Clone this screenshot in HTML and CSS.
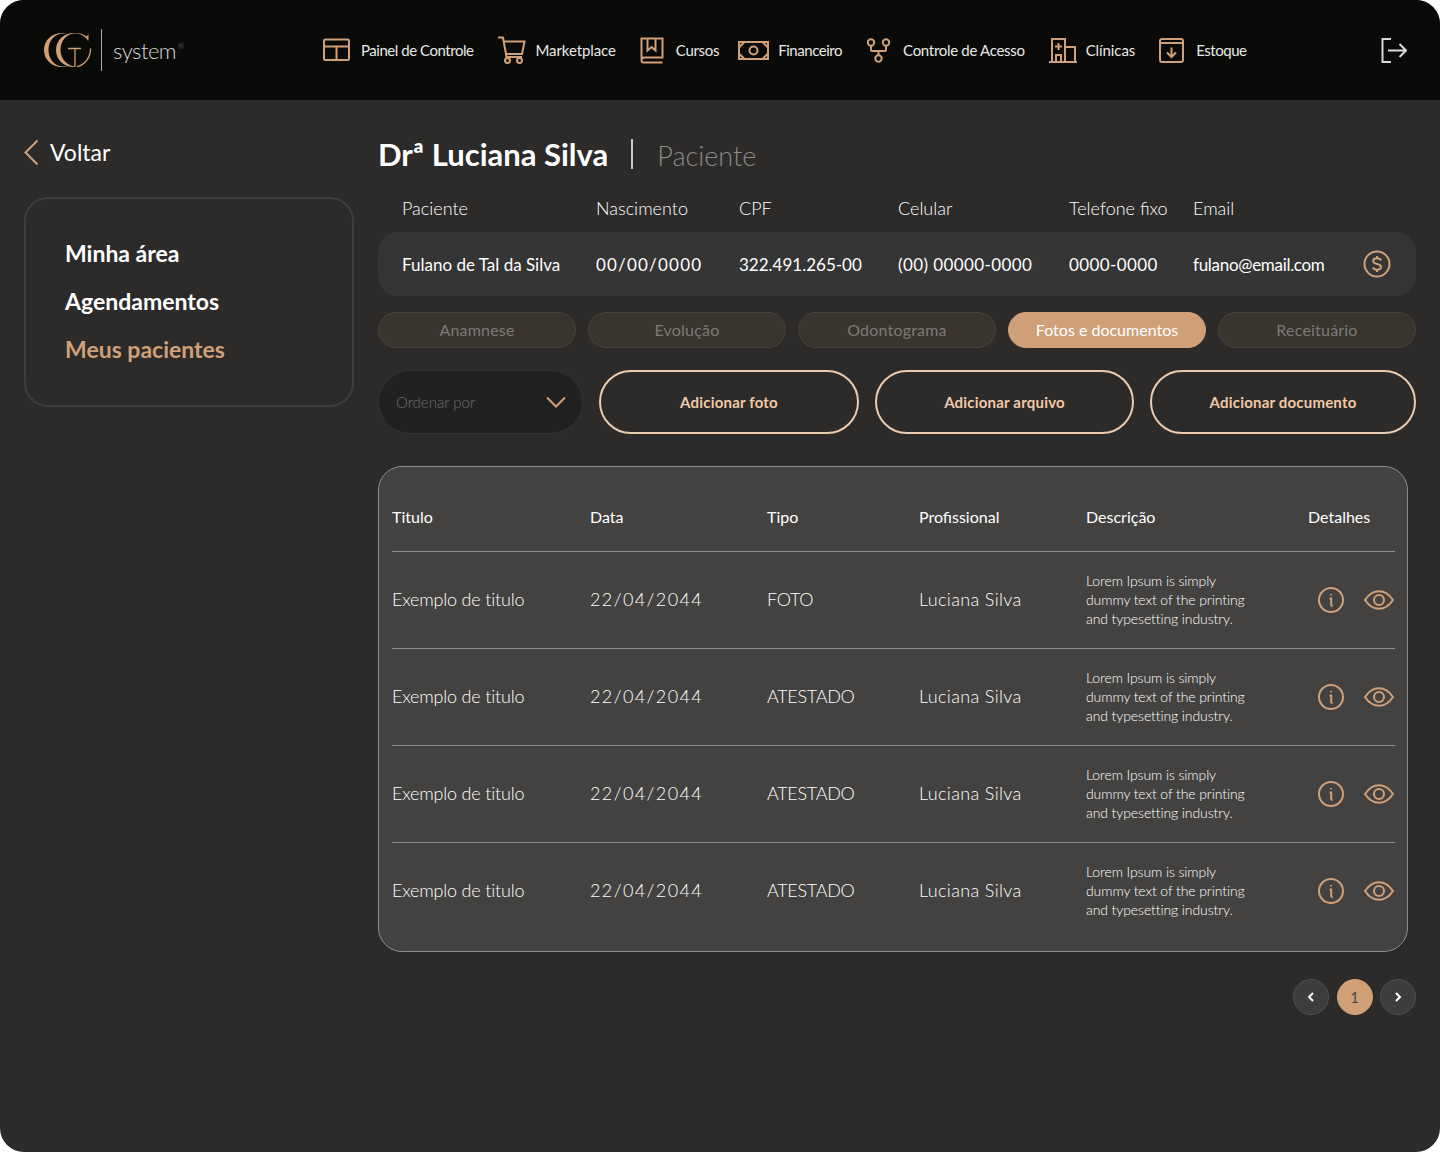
FILE: index.html
```html
<!DOCTYPE html>
<html lang="pt-BR">
<head>
    <meta charset="UTF-8">
    <meta name="viewport" content="width=device-width, initial-scale=1.0">
    <title>GC System - Paciente</title>
    <link rel="stylesheet" href="styles.css">
</head>
<body>
    <svg class="sprite" xmlns="http://www.w3.org/2000/svg">
        <symbol id="icon-info" viewBox="0 0 26 26">
            <circle cx="13" cy="13" r="12"/>
            <path d="M11.500 11.500h1.700v6.500c0 .8.500 1 1.500 1M13 7v1.200"/>
        </symbol>
        <symbol id="icon-eye" viewBox="0 0 30 20">
            <path d="M1 10C5 4 9.500 1.200 15 1.200S25 4 29 10c-4 6-8.500 8.800-14 8.800S5 16 1 10z"/>
            <circle cx="15" cy="10" r="5"/>
        </symbol>
    </svg>

    <div class="app">
        <header class="topbar">
            <div class="brand">
                <svg class="brand-mark" width="48" height="36" viewBox="0 0 48 36">
                    <path class="brand-fill" d="M18 1C8 1 0 8 0 18s8 17 18 17c2.500 0 5-.5 7-1.500-2 .6-4 .9-6 .9C11 34.400 4.500 27.500 4.500 18S11 1.600 19 1.600c2 0 4 .3 6 1.200C23 1.500 20.500 1 18 1z"/>
                    <path class="brand-fill" d="M30 1C20 1 12 8 12 18s8 17 18 17c1 0 1.800-.1 2.500-.3C24 34.400 16.500 27.500 16.500 18S23 1.500 31 1.500c5.500 0 10 2.500 13 7l.5-.1V2.500h-.6L43 4.500C40 2 35.500 1 30 1z"/>
                    <path class="brand-line" d="M24 16.500h13M31 16.500v18M46.500 16.500C46.800 25 41 33 33 34.700"/>
                </svg>
                <span class="brand-divider"></span>
                <span class="brand-name">system<sup>®</sup></span>
            </div>

            <nav class="nav">
                <a class="nav-item nav-item-long">
                    <svg width="28" height="24" viewBox="0 0 28 24"><rect x="1" y="1.500" width="25" height="20.500" rx="1.500"/><path d="M1 8.500h25M13.500 8.500V22"/></svg>
                    <span>Painel de Controle</span>
                </a>
                <a class="nav-item nav-item-wide">
                    <svg width="28" height="28" viewBox="0 0 28 28"><path d="M0 1.500h5l3.500 19.500h15.500M6 5.500h20.500l-2.500 12.500H8"/><circle cx="9.500" cy="24.500" r="2.500"/><circle cx="21.500" cy="24.500" r="2.500"/></svg>
                    <span>Marketplace</span>
                </a>
                <a class="nav-item nav-item-tight">
                    <svg width="26" height="27" viewBox="0 0 26 27"><path d="M1.500 21.500V1.500h21v19H4.500a3 3 0 0 0-3 3v.5a2 2 0 0 0 2 1.500h19"/><path d="M7.500 1.500v12l4-3.500 4 3.500v-12"/></svg>
                    <span>Cursos</span>
                </a>
                <a class="nav-item nav-item-close nav-item-long">
                    <svg width="31" height="19" viewBox="0 0 31 19"><rect x="1" y="1" width="29" height="17"/><circle cx="15.500" cy="9.500" r="4"/><path d="M1 6.500l5.500-5.500M1 12.500l5.500 5.500M30 6.500l-5.500-5.500M30 12.500l-5.500 5.500"/></svg>
                    <span>Financeiro</span>
                </a>
                <a class="nav-item">
                    <svg width="27" height="25" viewBox="0 0 27 25"><circle cx="5" cy="4.500" r="3.200"/><circle cx="20" cy="4.500" r="3.200"/><circle cx="12.500" cy="20.500" r="3.200"/><path d="M5 7.700v4.300a1 1 0 0 0 1 1h13a1 1 0 0 0 1-1V7.700M12.500 13v4.300"/></svg>
                    <span>Controle de Acesso</span>
                </a>
                <a class="nav-item nav-item-close nav-item-wide">
                    <svg width="28" height="25" viewBox="0 0 28 25"><path d="M0 24h28M3 24V1h13v23M16 9h10v15M7 24v-7h5v7M9.500 5v7M6 8.500h7"/></svg>
                    <span>Clínicas</span>
                </a>
                <a class="nav-item nav-item-long">
                    <svg width="27" height="25" viewBox="0 0 27 25"><rect x="1" y="1" width="23" height="23" rx="2"/><path d="M1 5h23M12.500 9.500v9.500M8 14.500l4.500 4.500 4.500-4.500"/></svg>
                    <span>Estoque</span>
                </a>
            </nav>

            <a class="logout">
                <svg width="26" height="25" viewBox="0 0 26 25"><path d="M10 1H1.500v23H10M7 12.500h18M18.500 6l6.500 6.500-6.500 6.500"/></svg>
            </a>
        </header>

        <main class="layout">
            <aside class="side">
                <a class="back">
                    <svg width="15" height="27" viewBox="0 0 15 27"><path d="M13.500 1.500L1.500 13.500l12 12"/></svg>
                    <span>Voltar</span>
                </a>
                <div class="side-menu">
                    <a class="side-link">Minha área</a>
                    <a class="side-link">Agendamentos</a>
                    <a class="side-link side-link-active">Meus pacientes</a>
                </div>
            </aside>

            <section class="content">
                <div class="title-row">
                    <h1>Drª Luciana Silva</h1>
                    <span class="title-sep"></span>
                    <span class="title-sub">Paciente</span>
                </div>

                <div class="patient-grid patient-head">
                    <span>Paciente</span>
                    <span>Nascimento</span>
                    <span>CPF</span>
                    <span>Celular</span>
                    <span>Telefone fixo</span>
                    <span>Email</span>
                </div>
                <div class="patient-grid patient-row">
                    <span>Fulano de Tal da Silva</span>
                    <span class="val-date">00/00/0000</span>
                    <span>322.491.265-00</span>
                    <span class="val-phone">(00) 00000-0000</span>
                    <span class="val-phone">0000-0000</span>
                    <span class="val-email">fulano@email.com</span>
                    <svg class="coin" width="28" height="28" viewBox="0 0 28 28"><circle cx="14" cy="14" r="12.500"/><path d="M18 10.500c-.5-1.300-2-2.200-4-2.200-2.300 0-3.800 1.200-3.800 2.800 0 4.200 7.800 1.700 7.800 5.900 0 1.600-1.700 2.700-4 2.700-2 0-3.500-.9-4.100-2.400M14 6v2.300M14 19.700V22"/></svg>
                </div>

                <div class="tabs">
                    <a class="tab">Anamnese</a>
                    <a class="tab">Evolução</a>
                    <a class="tab">Odontograma</a>
                    <a class="tab tab-active">Fotos e documentos</a>
                    <a class="tab">Receituário</a>
                </div>

                <div class="actions">
                    <div class="order">
                        <span>Ordenar por</span>
                        <svg width="20" height="12" viewBox="0 0 20 12"><path d="M1 1.500l9 9 9-9"/></svg>
                    </div>
                    <button class="action-btn">Adicionar foto</button>
                    <button class="action-btn">Adicionar arquivo</button>
                    <button class="action-btn">Adicionar documento</button>
                </div>

                <div class="table-card">
                    <table class="docs">
                        <thead>
                            <tr>
                                <th class="col-title">Titulo</th>
                                <th class="col-date">Data</th>
                                <th class="col-type">Tipo</th>
                                <th class="col-pro">Profissional</th>
                                <th class="col-desc">Descrição</th>
                                <th class="col-more">Detalhes</th>
                            </tr>
                        </thead>
                        <tbody>
                            <tr>
                                <td class="cell-title">Exemplo de titulo</td>
                                <td class="cell-date">22/04/2044</td>
                                <td class="cell-type">FOTO</td>
                                <td class="cell-pro">Luciana Silva</td>
                                <td class="desc">Lorem Ipsum is simply<br>dummy text of the printing<br>and typesetting industry.</td>
                                <td><div class="row-icons"><svg class="i-info"><use href="#icon-info"/></svg><svg class="i-eye"><use href="#icon-eye"/></svg></div></td>
                            </tr>
                            <tr>
                                <td class="cell-title">Exemplo de titulo</td>
                                <td class="cell-date">22/04/2044</td>
                                <td class="cell-type">ATESTADO</td>
                                <td class="cell-pro">Luciana Silva</td>
                                <td class="desc">Lorem Ipsum is simply<br>dummy text of the printing<br>and typesetting industry.</td>
                                <td><div class="row-icons"><svg class="i-info"><use href="#icon-info"/></svg><svg class="i-eye"><use href="#icon-eye"/></svg></div></td>
                            </tr>
                            <tr>
                                <td class="cell-title">Exemplo de titulo</td>
                                <td class="cell-date">22/04/2044</td>
                                <td class="cell-type">ATESTADO</td>
                                <td class="cell-pro">Luciana Silva</td>
                                <td class="desc">Lorem Ipsum is simply<br>dummy text of the printing<br>and typesetting industry.</td>
                                <td><div class="row-icons"><svg class="i-info"><use href="#icon-info"/></svg><svg class="i-eye"><use href="#icon-eye"/></svg></div></td>
                            </tr>
                            <tr>
                                <td class="cell-title">Exemplo de titulo</td>
                                <td class="cell-date">22/04/2044</td>
                                <td class="cell-type">ATESTADO</td>
                                <td class="cell-pro">Luciana Silva</td>
                                <td class="desc">Lorem Ipsum is simply<br>dummy text of the printing<br>and typesetting industry.</td>
                                <td><div class="row-icons"><svg class="i-info"><use href="#icon-info"/></svg><svg class="i-eye"><use href="#icon-eye"/></svg></div></td>
                            </tr>
                        </tbody>
                    </table>
                </div>

                <div class="pager">
                    <a class="page-btn"><svg width="8" height="10" viewBox="0 0 8 10"><path d="M6 1L2 5l4 4"/></svg></a>
                    <a class="page-btn page-current">1</a>
                    <a class="page-btn"><svg width="8" height="10" viewBox="0 0 8 10"><path d="M2 1l4 4-4 4"/></svg></a>
                </div>
            </section>
        </main>
    </div>
</body>
</html>
```

FILE: styles.css
```css
* {
    box-sizing: border-box;
}
body {
    font-family: 'Lato', sans-serif;
    background-color: #ffffff;
    color: #ffffff;
    margin: 0;
}
a {
    color: inherit;
    text-decoration: none;
}
svg {
    fill: none;
    stroke: #d0a079;
    stroke-width: 2;
    display: block;
}
.sprite {
    display: none;
}

.app {
    width: 1440px;
    height: 1152px;
    background: #2c2b2a;
    border-radius: 24px;
    overflow: hidden;
}

/* top bar */
.topbar {
    height: 100px;
    background: #0a0a09;
    display: flex;
    align-items: center;
    padding: 0 33px 0 44px;
}
.brand {
    display: flex;
    align-items: center;
    width: 279px;
}
.brand-mark {
    stroke: none;
}
.brand-fill {
    fill: #d0a079;
}
.brand-line {
    stroke: #d0a079;
    stroke-width: 1.3;
}
.brand-divider {
    width: 1px;
    height: 42px;
    background: #a9a9a7;
    margin: 0 11px 0 9px;
}
.brand-name {
    font-size: 22px;
    font-weight: 300;
    color: #d8d8d6;
    letter-spacing: -0.5px;
}
.brand-name sup {
    font-size: 7px;
    vertical-align: 10px;
    line-height: 0;
    margin-left: 2px;
    color: #a0a09e;
}
.nav {
    display: flex;
    align-items: center;
    gap: 24px;
}
.nav-item {
    display: flex;
    align-items: center;
    gap: 10px;
    font-size: 15px;
    letter-spacing: -0.3px;
    color: #e8e8e6;
}
.nav-item-long {
    letter-spacing: -0.46px;
}
.nav-item-wide {
    letter-spacing: -0.1px;
}
.nav-item-tight {
    margin-right: -5px;
}
.nav-item-close {
    gap: 9px;
}
.logout {
    margin-left: auto;
}
.logout svg {
    stroke: #d9d9d9;
}

/* page columns */
.layout {
    display: grid;
    grid-template-columns: 330px 1038px;
    column-gap: 24px;
    padding: 0 24px;
}
.back {
    display: flex;
    align-items: center;
    gap: 11px;
    height: 26px;
    margin-top: 39px;
    font-size: 23px;
}
.side-menu {
    margin-top: 32px;
    height: 210px;
    border: 2px solid #3f3e3c;
    border-radius: 24px;
    padding: 39px 39px;
    display: flex;
    flex-direction: column;
    gap: 18px;
}
.side-link {
    font-size: 23px;
    line-height: 30px;
    font-weight: 700;
}
.side-link-active {
    color: #d0a079;
}

/* title */
.title-row {
    display: flex;
    align-items: center;
    height: 32px;
    margin-top: 38px;
}
.title-row h1 {
    font-size: 31px;
    font-weight: 700;
    margin: 0;
    line-height: 32px;
}
.title-sep {
    width: 2px;
    height: 30px;
    background: #c9c9c7;
    margin: 0 24px 0 23px;
}
.title-sub {
    font-size: 27px;
    font-weight: 300;
    color: #8b8a87;
    margin-top: 2px;
}

/* patient info */
.patient-grid {
    display: grid;
    grid-template-columns: 194px 143px 159px 171px 124px 170px 1fr;
    align-items: center;
    padding-left: 24px;
}
.patient-head {
    margin-top: 14px;
    height: 48px;
    font-size: 18px;
    font-weight: 300;
}
.patient-row {
    height: 64px;
    background: #353535;
    border-radius: 20px;
    font-size: 17px;
}
.val-date {
    letter-spacing: 1.2px;
}
.val-phone {
    letter-spacing: 0.4px;
}
.val-email {
    letter-spacing: -0.3px;
}

/* tabs */
.tabs {
    display: grid;
    grid-template-columns: repeat(5, 198px);
    column-gap: 12px;
    margin-top: 16px;
}
.tab {
    height: 36px;
    line-height: 34px;
    text-align: center;
    font-size: 16px;
    letter-spacing: 0.2px;
    color: #7c7a76;
    background: #39342e;
    border: 1px solid #47433d;
    border-radius: 18px;
}
.tab-active {
    background: #d0a079;
    border-color: #d0a079;
    color: #ffffff;
    letter-spacing: 0;
}

/* actions */
.actions {
    display: grid;
    grid-template-columns: 205px 260px 259px 266px;
    column-gap: 16px;
    margin-top: 22px;
}
.order {
    height: 64px;
    display: flex;
    align-items: center;
    justify-content: space-between;
    padding: 0 16px 0 17px;
    background: #212121;
    border: 1px solid #333332;
    border-radius: 32px;
    font-size: 15px;
    font-weight: 300;
    color: #6f6e6c;
}
.action-btn {
    height: 64px;
    background: transparent;
    border: 2px solid #eccbae;
    border-radius: 32px;
    color: #f0c9a8;
    font-family: inherit;
    font-size: 15px;
    font-weight: 700;
    letter-spacing: 0.2px;
}

/* documents table */
.table-card {
    width: 1030px;
    height: 486px;
    margin-top: 32px;
    padding: 0 12px 0 13px;
    background: #434240;
    border: 1px solid #8d8c8a;
    border-radius: 24px;
}
.docs {
    width: 1003px;
    table-layout: fixed;
    border-collapse: collapse;
}
.docs th {
    height: 84px;
    padding: 16px 0 0;
    text-align: left;
    font-size: 16px;
    font-weight: 400;
    border-bottom: 1px solid #8d8c8a;
}
.col-title { width: 198px; }
.col-date { width: 177px; }
.col-type { width: 152px; }
.col-pro { width: 167px; }
.col-desc { width: 222px; }
.col-more { width: 87px; }
.docs td {
    height: 97px;
    padding: 0;
    font-size: 18px;
    font-weight: 300;
    color: #ffffff;
    border-bottom: 1px solid #8d8c8a;
}
.docs tbody tr:last-child td {
    border-bottom: none;
}
.docs td.cell-title,
.docs td.cell-date,
.docs td.cell-type,
.docs td.cell-pro {
    padding-bottom: 2px;
}
.docs td.cell-title {
    letter-spacing: -0.2px;
}
.docs td.cell-date {
    letter-spacing: 1.4px;
}
.docs td.cell-type {
    letter-spacing: -0.3px;
}
.docs td.cell-pro {
    letter-spacing: 0.35px;
}
.docs td.desc {
    font-size: 14px;
    line-height: 19px;
    color: #ffffff;
    letter-spacing: -0.1px;
}
.row-icons {
    display: flex;
    justify-content: flex-end;
    align-items: center;
    gap: 20px;
    padding-right: 1px;
}
.i-info {
    width: 26px;
    height: 26px;
}
.i-eye {
    width: 30px;
    height: 20px;
}

/* pagination */
.pager {
    display: flex;
    justify-content: flex-end;
    gap: 7.5px;
    margin-top: 27px;
}
.page-btn {
    width: 36px;
    height: 36px;
    display: flex;
    align-items: center;
    justify-content: center;
    background: #3e3d3c;
    border: 1px solid #51504e;
    border-radius: 50%;
    font-size: 15px;
}
.page-btn svg {
    stroke: #ffffff;
}
.page-current {
    background: #d0a079;
    border-color: #d0a079;
    color: #4a4744;
}
```
